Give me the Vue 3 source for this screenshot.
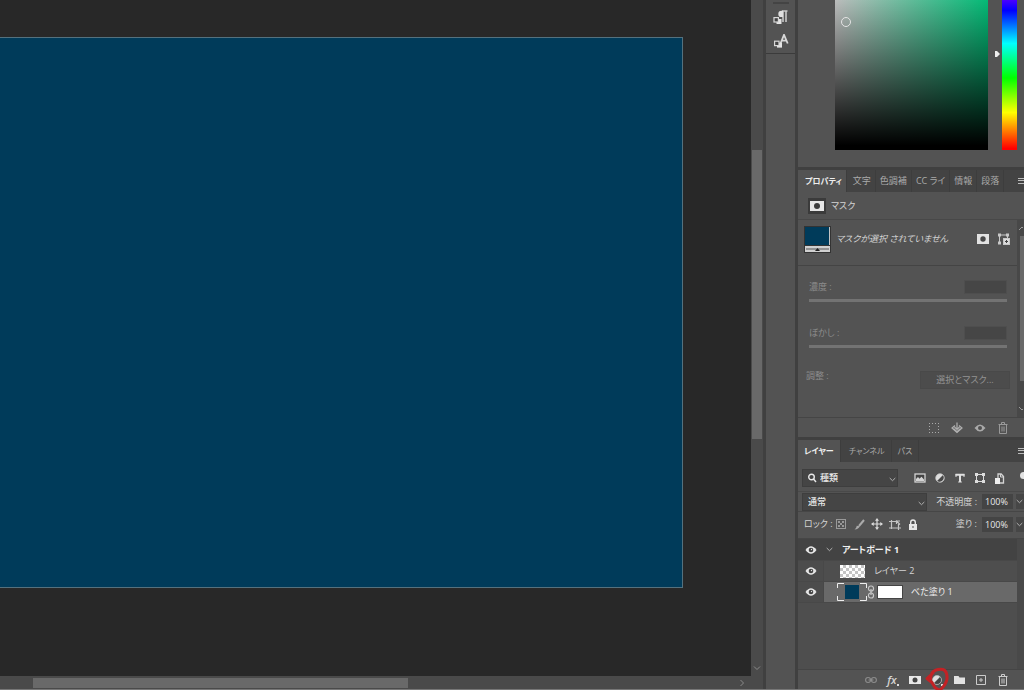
<script setup>
import { ref } from 'vue'

const propertyTabs = ['文字', '色調補', 'CC ライ', '情報', '段落']
const kind = ref('種類')
const blend = ref('通常')
const opacity = ref('100%')
const fill = ref('100%')
const selected = ref(2)
</script>

<template>
  <main class="app">
    <section class="document">
      <div class="canvas"><div class="artboard"></div></div>
      <div class="vscroll">
        <div class="vthumb"></div>
        <svg class="tiny" viewBox="0 0 8 8"><path d="M1 2.5l3 3 3-3" /></svg>
      </div>
      <div class="hscroll">
        <div class="hthumb"></div>
        <svg class="tiny" viewBox="0 0 8 8"><path d="M2.5 1l3 3-3 3" /></svg>
      </div>
      <div class="corner"></div>
    </section>

    <nav class="dock" aria-label="パネル">
      <div class="dock-group">
        <span class="grip"></span>
        <button class="dock-btn" aria-label="段落スタイル">
          <svg width="16" height="16" viewBox="0 0 16 16">
            <path d="M9 1H14.500M10 1v11M13 1v11" fill="none" stroke="#c8c8c8" stroke-width="1.6" />
            <path d="M10 .7H8.500a3.200 3.200 0 000 6.400H10z" fill="#e0e0e0" />
            <rect x="3.500" y="9" width="5" height="5" fill="#e4e4e4" />
            <rect x="1" y="7.6" width="4.4" height="4.4" fill="#444" stroke="#d8d8d8" stroke-width="1.2" />
          </svg>
        </button>
        <button class="dock-btn" aria-label="文字スタイル">
          <svg width="16" height="16" viewBox="0 0 16 16">
            <path d="M7.5 9.500L11 .8l3.700 8.700M8.800 6.600h4.600" fill="none" stroke="#d8d8d8" stroke-width="1.8" />
            <rect x="4" y="8.600" width="5" height="5" fill="#e4e4e4" />
            <rect x="1.6" y="7.200" width="4.4" height="4.4" fill="#444" stroke="#d8d8d8" stroke-width="1.2" />
          </svg>
        </button>
      </div>
    </nav>

    <aside class="panels">
      <section class="color">
        <div class="field"><span class="picker"></span></div>
        <svg class="hue-arrow" width="6" height="8" viewBox="0 0 6 8"><path d="M1 1h2l3 3-3 3H1z" fill="#eee" /></svg>
        <div class="hue"></div>
      </section>

      <section class="properties">
        <div class="tabs">
          <button class="tab active">プロパティ</button>
          <button v-for="t in propertyTabs" :key="t" class="tab">{{ t }}</button>
          <button class="menu" aria-label="メニュー"><i></i></button>
        </div>
        <div class="mask-head">
          <span class="mask-chip"><svg width="14" height="10" viewBox="0 0 14 10"><rect width="14" height="10" fill="#e6e6e6" /><circle cx="7" cy="5" r="3" fill="#3b3b3b" /></svg></span>
          マスク
        </div>
        <div class="prop-main">
          <div class="prop-content">
            <div class="mask-row">
              <span class="fill-thumb"><i></i><svg width="25" height="6" viewBox="0 0 25 6"><rect width="25" height="6" fill="#d0d0d0" /><path d="M1 3h23" stroke="#555" /><path d="M10 5l2.500-3L15 5z" fill="#222" /></svg></span>
              <em>マスクが選択 されていません</em>
              <button class="icon" aria-label="ピクセルマスク"><svg width="12" height="10" viewBox="0 0 12 10"><rect width="12" height="10" fill="#e2e2e2" /><circle cx="6" cy="5" r="2.700" fill="#484848" /></svg></button>
              <button class="icon" aria-label="ベクトルマスク">
                <svg width="14" height="12" viewBox="0 0 14 12" fill="none" stroke="#c8c8c8"><path d="M3 2h6M2.500 3v6M10.500 3v3" /><path d="M1 .5h3v3H1zM9 .5h3v3H9zM1 8.500h3v3H1z" fill="#c8c8c8" stroke="none" /><rect x="6.500" y="5.500" width="6" height="6" fill="#ddd" /><path d="M9.500 7v3M8 8.500h3" stroke="#444" /></svg>
              </button>
            </div>
            <div class="adjust">
              <div class="slide-row">
                <label for="density">濃度 :</label><input id="density" class="value" type="text" disabled />
                <input class="range" type="range" aria-label="濃度" disabled />
              </div>
              <div class="slide-row">
                <label for="feather">ぼかし :</label><input id="feather" class="value" type="text" disabled />
                <input class="range" type="range" aria-label="ぼかし" disabled />
              </div>
              <div class="refine"><span>調整 :</span><button disabled>選択とマスク...</button></div>
            </div>
          </div>
          <div class="side-scroll">
            <svg width="6" height="8" viewBox="0 0 6 8"><path d="M2 5l3-3 3 3" /></svg>
            <i></i>
            <svg width="6" height="8" viewBox="0 0 6 8"><path d="M2 3l3 3 3-3" /></svg>
          </div>
        </div>
        <div class="prop-foot">
          <button class="icon" aria-label="選択範囲を読み込み"><svg width="10" height="10" viewBox="0 0 10 10"><path d="M.5 0v10M3.500 0v10M6.500 0v10M9.500 0v10" stroke="#aaa" stroke-dasharray="1 2" /><path d="M2 2h6v5H2z" fill="#535353" /></svg></button>
          <button class="icon" aria-label="マスクを適用"><svg width="12" height="12" viewBox="0 0 12 12" fill="none" stroke="#b0b0b0" stroke-width="1.200"><path d="M4 3.500L1 6l5 4.500L11 6 8 3.500M6 .5v6M3.500 5L6 7.500 8.500 5" /><path d="M2.500 6.500L6 9.700l3.500-3.200" /></svg></button>
          <button class="icon" aria-label="マスクの表示"><svg width="12" height="10" viewBox="0 0 12 10"><path d="M.5 5q5.500-7 11 0-5.500 7-11 0z" fill="#aaa" /><circle cx="6" cy="5" r="2" fill="#505050" /></svg></button>
          <button class="icon" aria-label="マスクを削除"><svg width="10" height="12" viewBox="0 0 10 12" fill="none" stroke="#999"><path d="M.5 2.500h9M3.500 2V.5h3V2M1.500 3v8.500h7V3M4 4.500v5M6 4.500v5" /></svg></button>
        </div>
      </section>

      <section class="layers">
        <div class="tabs layer-tabs">
          <button class="tab active">レイヤー</button>
          <button class="tab">チャンネル</button>
          <button class="tab">パス</button>
          <button class="menu" aria-label="メニュー"><i></i></button>
        </div>

        <div class="filter-row">
          <div class="select kind">
            <svg class="search" width="10" height="10" viewBox="0 0 10 10"><circle cx="4.500" cy="4" r="2.800" /><path d="M6.500 6L9 9" /></svg>
            <select v-model="kind" aria-label="フィルター"><option>種類</option></select>
            <svg class="chev" width="7" height="5" viewBox="0 0 7 5"><path d="M.7 1l2.800 2.700L6.300 1" /></svg>
          </div>
          <div class="filters">
            <button class="icon" aria-label="ピクセル"><svg width="12" height="10" viewBox="0 0 12 10"><rect x="1" y="1" width="10" height="8" fill="#444" stroke="#d4d4d4" stroke-width="1.300" /><path d="M2 8V6l2-2 1.500 1.800 2-2L10 6.500V8z" fill="#d4d4d4" /></svg></button>
            <button class="icon" aria-label="調整"><svg width="10" height="10" viewBox="0 0 10 10"><circle cx="5" cy="5" r="4.300" fill="#dedede" /><path d="M8 2A4.300 4.300 0 012 8z" fill="#484848" /><circle cx="5" cy="5" r="4.300" fill="none" stroke="#ccc" stroke-width=".7" /></svg></button>
            <button class="icon" aria-label="テキスト"><svg width="10" height="10" viewBox="0 0 10 10" fill="none" stroke="#e0e0e0"><path d="M.5 1.700h9M5 1.500V9" stroke-width="2" /><path d="M1 1v3M9 1v3M3.200 9h3.600" /></svg></button>
            <button class="icon" aria-label="シェイプ"><svg width="10" height="10" viewBox="0 0 10 10"><path d="M1.500 1.500h7v7h-7z" fill="none" stroke="#ddd" /><path d="M0 0h3v3H0zM7 0h3v3H7zM0 7h3v3H0zM7 7h3v3H7z" fill="#ddd" /></svg></button>
            <button class="icon" aria-label="スマートオブジェクト"><svg width="10" height="11" viewBox="0 0 10 11"><path d="M3 5V1h3.200l2.300 2.500V10H5" fill="none" stroke="#d4d4d4" stroke-width="1.300" /><path d="M5.500 1v3h3" stroke="#d4d4d4" fill="none" /><rect y="5" width="5" height="6" fill="#eee" /></svg></button>
          </div>
          <button class="toggle" aria-label="フィルターの切り替え"><i></i></button>
        </div>

        <div class="blend-row">
          <div class="select mode">
            <select v-model="blend" aria-label="描画モード"><option>通常</option></select>
            <svg class="chev" width="7" height="5" viewBox="0 0 7 5"><path d="M.7 1l2.800 2.700L6.300 1" /></svg>
          </div>
          <label for="opacity">不透明度 :</label>
          <input id="opacity" v-model="opacity" class="percent" type="text" />
          <button class="drop" aria-label="不透明度スライダー"><svg class="chev" width="7" height="5" viewBox="0 0 7 5"><path d="M.7 1l2.800 2.700L6.300 1" /></svg></button>
        </div>

        <div class="lock-row">
          <span class="lock-label">ロック :</span>
          <button class="icon" aria-label="透明ピクセル"><svg width="10" height="10" viewBox="0 0 10 10"><rect x=".5" y=".5" width="9" height="9" fill="none" stroke="#999" /><path d="M2 2h2v2H2zM6 2h2v2H6zM4 4h2v2H4zM2 6h2v2H2zM6 6h2v2H6z" fill="#999" /></svg></button>
          <button class="icon" aria-label="画像ピクセル"><svg width="11" height="11" viewBox="0 0 11 11"><path d="M10 1L5 7" stroke="#aaa" stroke-width="2" /><path d="M5.800 7.300q-1 3-5.300 3.200 2-1.200 2.300-3.700z" fill="#aaa" /></svg></button>
          <button class="icon" aria-label="位置"><svg width="12" height="12" viewBox="0 0 12 12"><path d="M6 2v8M2 6h8" stroke="#ddd" stroke-width="1.200" /><path d="M6 0l2 2.700H4zM6 12l2-2.700H4zM0 6l2.700-2v4zM12 6L9.300 4v4z" fill="#ddd" /></svg></button>
          <button class="icon" aria-label="アートボード"><svg width="12" height="11" viewBox="0 0 12 11" fill="none" stroke="#c4c4c4" stroke-width="1.200"><path d="M2.500 1v9M0 2.500h7M0 9h12M9.500 5v6M7 1.500l4 4M7.500 5V2H11" /></svg></button>
          <button class="icon" aria-label="すべてをロック"><svg width="10" height="11" viewBox="0 0 10 11"><rect x="1" y="5" width="8" height="6" fill="#e8e8e8" /><path d="M2.700 5V3.300a2.300 2.300 0 014.600 0V5" fill="none" stroke="#e8e8e8" stroke-width="1.400" /><path d="M5 7v2" stroke="#555" /></svg></button>
          <label class="fill-label" for="fill">塗り :</label>
          <input id="fill" v-model="fill" class="percent" type="text" />
          <button class="drop" aria-label="塗りスライダー"><svg class="chev" width="7" height="5" viewBox="0 0 7 5"><path d="M.7 1l2.800 2.700L6.300 1" /></svg></button>
        </div>

        <ul class="list">
          <li v-for="n in 3" :key="n" :class="['layer', { group: n === 1, selected: n === selected + 1 }]">
            <button class="eye" aria-label="レイヤーの表示"><svg width="12" height="10" viewBox="0 0 12 10"><path d="M.5 5q5.500-7.500 11 0-5.500 7.500-11 0z" fill="#e6e6e6" /><circle cx="6" cy="5" r="2.300" fill="#444" /><circle cx="6.500" cy="4.500" r=".7" fill="#ddd" /></svg></button>
            <div class="body" @click="selected = n - 1">
              <template v-if="n === 1">
                <svg class="chev fold" width="7" height="5" viewBox="0 0 7 5"><path d="M.7 1l2.800 2.700L6.300 1" /></svg>
                <strong>アートボード 1</strong>
              </template>
              <template v-else-if="n === 2">
                <span class="checker"></span><span class="name">レイヤー 2</span>
              </template>
              <template v-else>
                <svg class="solid" width="30" height="18" viewBox="0 0 30 18"><rect x="8" y="2" width="14" height="14" fill="#003b5a" /><path d="M.5 5V.5H7M23 .5h6.500V5M.5 13v4.500H7M23 17.500h6.500V13" fill="none" stroke="#eee" /></svg>
                <svg width="8" height="14" viewBox="0 0 8 14" fill="none" stroke="#c8c8c8" stroke-width="1.200"><rect x="1.500" y="1" width="5" height="5" rx="2.200" /><rect x="1.500" y="8" width="5" height="5" rx="2.200" /><path d="M4 4v6" /></svg>
                <span class="white"></span><span class="name">べた塗り 1</span>
              </template>
            </div>
          </li>
        </ul>

        <div class="layer-foot">
          <button class="icon" aria-label="リンク"><svg width="12" height="8" viewBox="0 0 12 8" fill="none" stroke="#8c8c8c" stroke-width="1.100"><rect x=".6" y="1.500" width="5" height="5" rx="2.500" /><rect x="6.400" y="1.500" width="5" height="5" rx="2.500" /><path d="M3.500 4h5" /></svg></button>
          <button class="icon fx" aria-label="スタイル"><em>fx</em><b></b></button>
          <button class="icon" aria-label="マスクを追加"><svg width="12" height="10" viewBox="0 0 12 10"><rect y="1" width="12" height="8" fill="#e8e8e8" /><circle cx="6" cy="5" r="2.500" fill="#444" /></svg></button>
          <button class="icon adjustment" aria-label="調整レイヤー">
            <svg width="12" height="12" viewBox="0 0 12 12"><circle cx="6" cy="6" r="4.500" fill="#dedede" /><path d="M9.200 2.800a4.500 4.500 0 01-6.400 6.400z" fill="#444" /><circle cx="6" cy="6" r="4.500" fill="none" stroke="#bbb" stroke-width=".7" /><path d="M10 10h2v2h-2z" fill="#ddd" /></svg>
            <svg class="mark" width="26" height="27" viewBox="0 0 26 27"><path d="M9 7L3 12.500l5 4 3 5 4.500 3Q22 19 23 13 23.500 5 19 3.500 12 2.500 8 7" fill="none" stroke="#c32225" stroke-width="3" stroke-linejoin="round" stroke-linecap="round" /><path d="M3 12l6-5-1.500 9z" fill="#c32225" /></svg>
          </button>
          <button class="icon" aria-label="グループ"><svg width="11" height="9" viewBox="0 0 11 9"><path d="M0 1h4.500l1 1.500H11V9H0z" fill="#e2e2e2" /></svg></button>
          <button class="icon" aria-label="新規レイヤー"><svg width="10" height="10" viewBox="0 0 10 10" fill="none" stroke="#ccc"><path d="M.5.500h9v9h-9zM5 3v4M3 5h4" /></svg></button>
          <button class="icon" aria-label="削除"><svg width="10" height="12" viewBox="0 0 10 12" fill="none" stroke="#ccc"><path d="M.5 2.500h9M3.500 2V.5h3V2M1.500 3v8.500h7V3M4 4.500v5M6 4.500v5" /></svg></button>
        </div>
      </section>
    </aside>
  </main>
</template>

<style>
body { background: #fff; overflow: hidden; }
</style>

<style scoped>
* { box-sizing: border-box; }
.app {
  display: flex;
  height: calc(100vh - 4px);
  background: #404040;
  border-bottom: 1px solid #777;
  color: #d4d4d4;
  font: 9px/12px "Open Sans", "Noto Sans CJK JP", sans-serif;
  font-feature-settings: "palt";
}
button, input, select { font: inherit; font-feature-settings: inherit; color: inherit; border: 0; background: none; padding: 0; margin: 0; border-radius: 0; min-width: 0; }
svg { display: block; flex: none; }
em { font-style: italic; }

.document { flex: 1; display: grid; grid-template-columns: 1fr 12px; grid-template-rows: 1fr 13px; min-width: 0; }
.canvas { display: flex; background: #282828; padding: 37px 68px 88px 0; }
.artboard { flex: 1; background: #003b5a; border: solid #54717e; border-width: 1px 1px 1px 0; }
.vscroll, .hscroll, .corner { background: #4a4a4a; }
.vscroll { display: flex; flex-direction: column; align-items: center; padding: 150px 0 4px; }
.vthumb { width: 10px; height: 289px; background: #696969; margin-bottom: auto; }
.hscroll { display: flex; align-items: center; justify-content: space-between; padding: 0 5px 0 33px; }
.hthumb { flex: 0 0 375px; height: 10px; background: #696969; }
.tiny { width: 8px; height: 8px; fill: none; stroke: #8a8a8a; }

.dock { width: 32px; margin-left: 3px; background: #535353; border-right: 3px solid #404040; }
.dock-group { display: flex; flex-direction: column; align-items: center; gap: 4px; height: 54px; padding-top: 2px; border-bottom: 1px solid #3b3b3b; }
.grip { width: 16px; height: 2px; background: #444; }
.dock-btn { height: 20px; display: flex; align-items: center; }

.panels { width: 226px; display: flex; flex-direction: column; background: #535353; }
.color { display: flex; height: 170px; padding: 0 7px 17px 37px; border-bottom: 3px solid #404040; }
.field { position: relative; flex: 1; background: linear-gradient(transparent, #000 97%), linear-gradient(to right, #bcbcbc, #04ba76); }
.picker { position: absolute; left: 6px; top: 17px; width: 10px; height: 10px; border: 1px solid #e4e4e4; border-radius: 50%; }
.hue-arrow { margin: 50px 2px 0 6px; }
.hue { width: 15px; background: linear-gradient(#4a00ff, #00f 7%, #0ff 29%, #0f0 52%, #ff0 75%, #f00 99%); }

.tabs { display: flex; height: 22px; background: #434343; color: #aaa; }
.tab { padding: 0 4px; white-space: nowrap; border-right: 1px solid #3d3d3d; }
.tab.active { background: #535353; color: #eee; padding: 0 4px 0 7px; margin-right: 2px; font-size: 8px; font-weight: 600; }
.layer-tabs .tab { padding: 0 6px; font-size: 8px; }
.menu { margin-left: auto; width: 6px; display: flex; align-items: center; }
.menu i { width: 6px; height: 6px; border-top: 1px solid #bbb; border-bottom: 1px solid #bbb; background: linear-gradient(transparent 1px, #bbb 1px, #bbb 2px, transparent 2px); }
.mask-head { display: flex; align-items: center; gap: 5px; height: 28px; padding-left: 10px; border-bottom: 1px solid #484848; }
.mask-chip { background: #3b3b3b; padding: 3px 2px; }
.prop-main { display: flex; height: 198px; border-bottom: 1px solid #454545; }
.prop-content { flex: 1; min-width: 0; }
.mask-row { display: flex; align-items: center; gap: 8px; height: 46px; padding: 0 6px 7px 6px; border-bottom: 1px solid #444; }
.fill-thumb { display: block; padding: 1px; background: #333; }
.fill-thumb i { display: block; width: 25px; height: 18px; margin-bottom: 1px; background: #003b5a; border-right: 1px solid #c4c4c4; }
.mask-row em { flex: 1; margin-left: -3px; white-space: nowrap; }
.adjust { padding: 13px 7px 0 8px; color: #8c8c8c; }
.slide-row { display: grid; grid-template-columns: 1fr 43px; grid-template-rows: 16px 9px; height: 46px; padding: 0 3px 0 3px; align-items: center; align-content: start; }
.value { height: 14px; width: 43px; background: #464646; border: 1px solid #4e4e4e; }
.range { grid-column: 1 / -1; appearance: none; width: 100%; height: 3px; background: #737373; margin: 2px 0 0; }
.range::-webkit-slider-thumb { appearance: none; width: 0; height: 0; }
.refine { display: flex; justify-content: space-between; align-items: flex-start; }
.refine span { margin-top: -1px; }
.refine button { width: 90px; height: 18px; background: #4c4c4c; border: 1px solid #494949; color: #929292; }
.side-scroll { width: 7px; display: flex; flex-direction: column; justify-content: space-between; background: #484848; padding: 5px 0; }
.side-scroll i { align-self: flex-end; width: 4px; height: 145px; margin-bottom: 20px; background: #696969; }
.side-scroll svg { fill: none; stroke: #999; }
.prop-foot, .layer-foot { display: flex; justify-content: flex-end; padding-right: 10px; }
.prop-foot { height: 22px; border-bottom: 3px solid #404040; }
.prop-foot .icon { width: 23px; }
.icon { display: flex; align-items: center; justify-content: center; flex: none; }

.layers { flex: 1; display: flex; flex-direction: column; min-height: 0; }
.select { position: relative; display: flex; align-items: center; background: #454545; border: 1px solid #3e3e3e; color: #e8e8e8; height: 18px; }
.select select { appearance: none; flex: 1; width: 100%; height: 16px; padding-left: 5px; outline: 0; font-weight: 500; }
.chev { fill: none; stroke: #b0b0b0; stroke-width: 1; }
.select .chev { position: absolute; right: 1px; top: 7px; pointer-events: none; }
.kind { width: 96px; padding-left: 4px; }
.kind select { padding-left: 3px; }
.search { fill: none; stroke: #e8e8e8; stroke-width: 1.4; }
.filter-row { display: flex; align-items: center; height: 30px; padding: 3px 0 0 4px; border-bottom: 1px solid #494949; }
.filters { display: flex; flex: 1; margin-left: 12px; }
.filters .icon { width: 20px; }
.toggle { width: 4px; height: 18px; overflow: hidden; }
.toggle i { display: block; width: 7px; height: 7px; margin-bottom: 6px; border-radius: 50%; background: #e2e2e2; }
.blend-row, .lock-row { display: flex; align-items: center; border-bottom: 1px solid #464646; }
.blend-row { height: 20px; padding-left: 4px; }
.mode { width: 125px; }
.blend-row label { flex: 1; text-align: right; white-space: nowrap; margin-right: 5px; }
.percent { width: 31px; height: 15px; background: #444; padding-left: 3px; outline: 0; color: #e8e8e8; font-weight: 500; }
.drop { display: flex; align-items: center; width: 8px; height: 15px; margin-left: 3px; background: #464646; }
.lock-row { height: 27px; padding: 0 0 2px 6px; }
.lock-label { width: 28px; white-space: nowrap; }
.lock-row .icon { width: 18px; }
.fill-label { flex: 1; text-align: right; margin-right: 5px; }
.list { list-style: none; flex: 1; margin: 0; padding: 0; border-right: 7px solid #494949; background: #4e4e4e; }
.layer { display: flex; height: 21px; border-bottom: 1px solid #484848; }
.layer.group { height: 22px; background: #434343; color: #f0f0f0; }
.eye { width: 26px; display: flex; align-items: center; justify-content: center; background: #4c4c4c; border-right: 1px solid #484848; }
.group .eye { background: #434343; border-color: #434343; }
.body { flex: 1; display: flex; align-items: center; }
.selected .body { background: #696969; color: #eee; }
.fold { margin: 0 9px 0 2px; }
.checker { width: 25px; height: 13px; margin: 0 9px 0 16px; background: repeating-conic-gradient(#c4c4c4 0 25%, #fff 0 50%) 0 0 / 6px 6px; }
.solid { margin-left: 13px; }
.white { width: 26px; height: 14px; margin: 0 8px 0 2px; background: #fff; border: 1px solid #444; }
.layer-foot { height: 20px; border-top: 1px solid #454545; }
.layer-foot .icon { width: 22px; }
.fx em { font: italic 600 11px/14px "Open Sans", sans-serif; }
.fx b { width: 2px; height: 2px; margin-top: 10px; background: #ddd; }
.adjustment { position: relative; }
.mark { position: absolute; left: -2px; top: -4px; }
</style>
